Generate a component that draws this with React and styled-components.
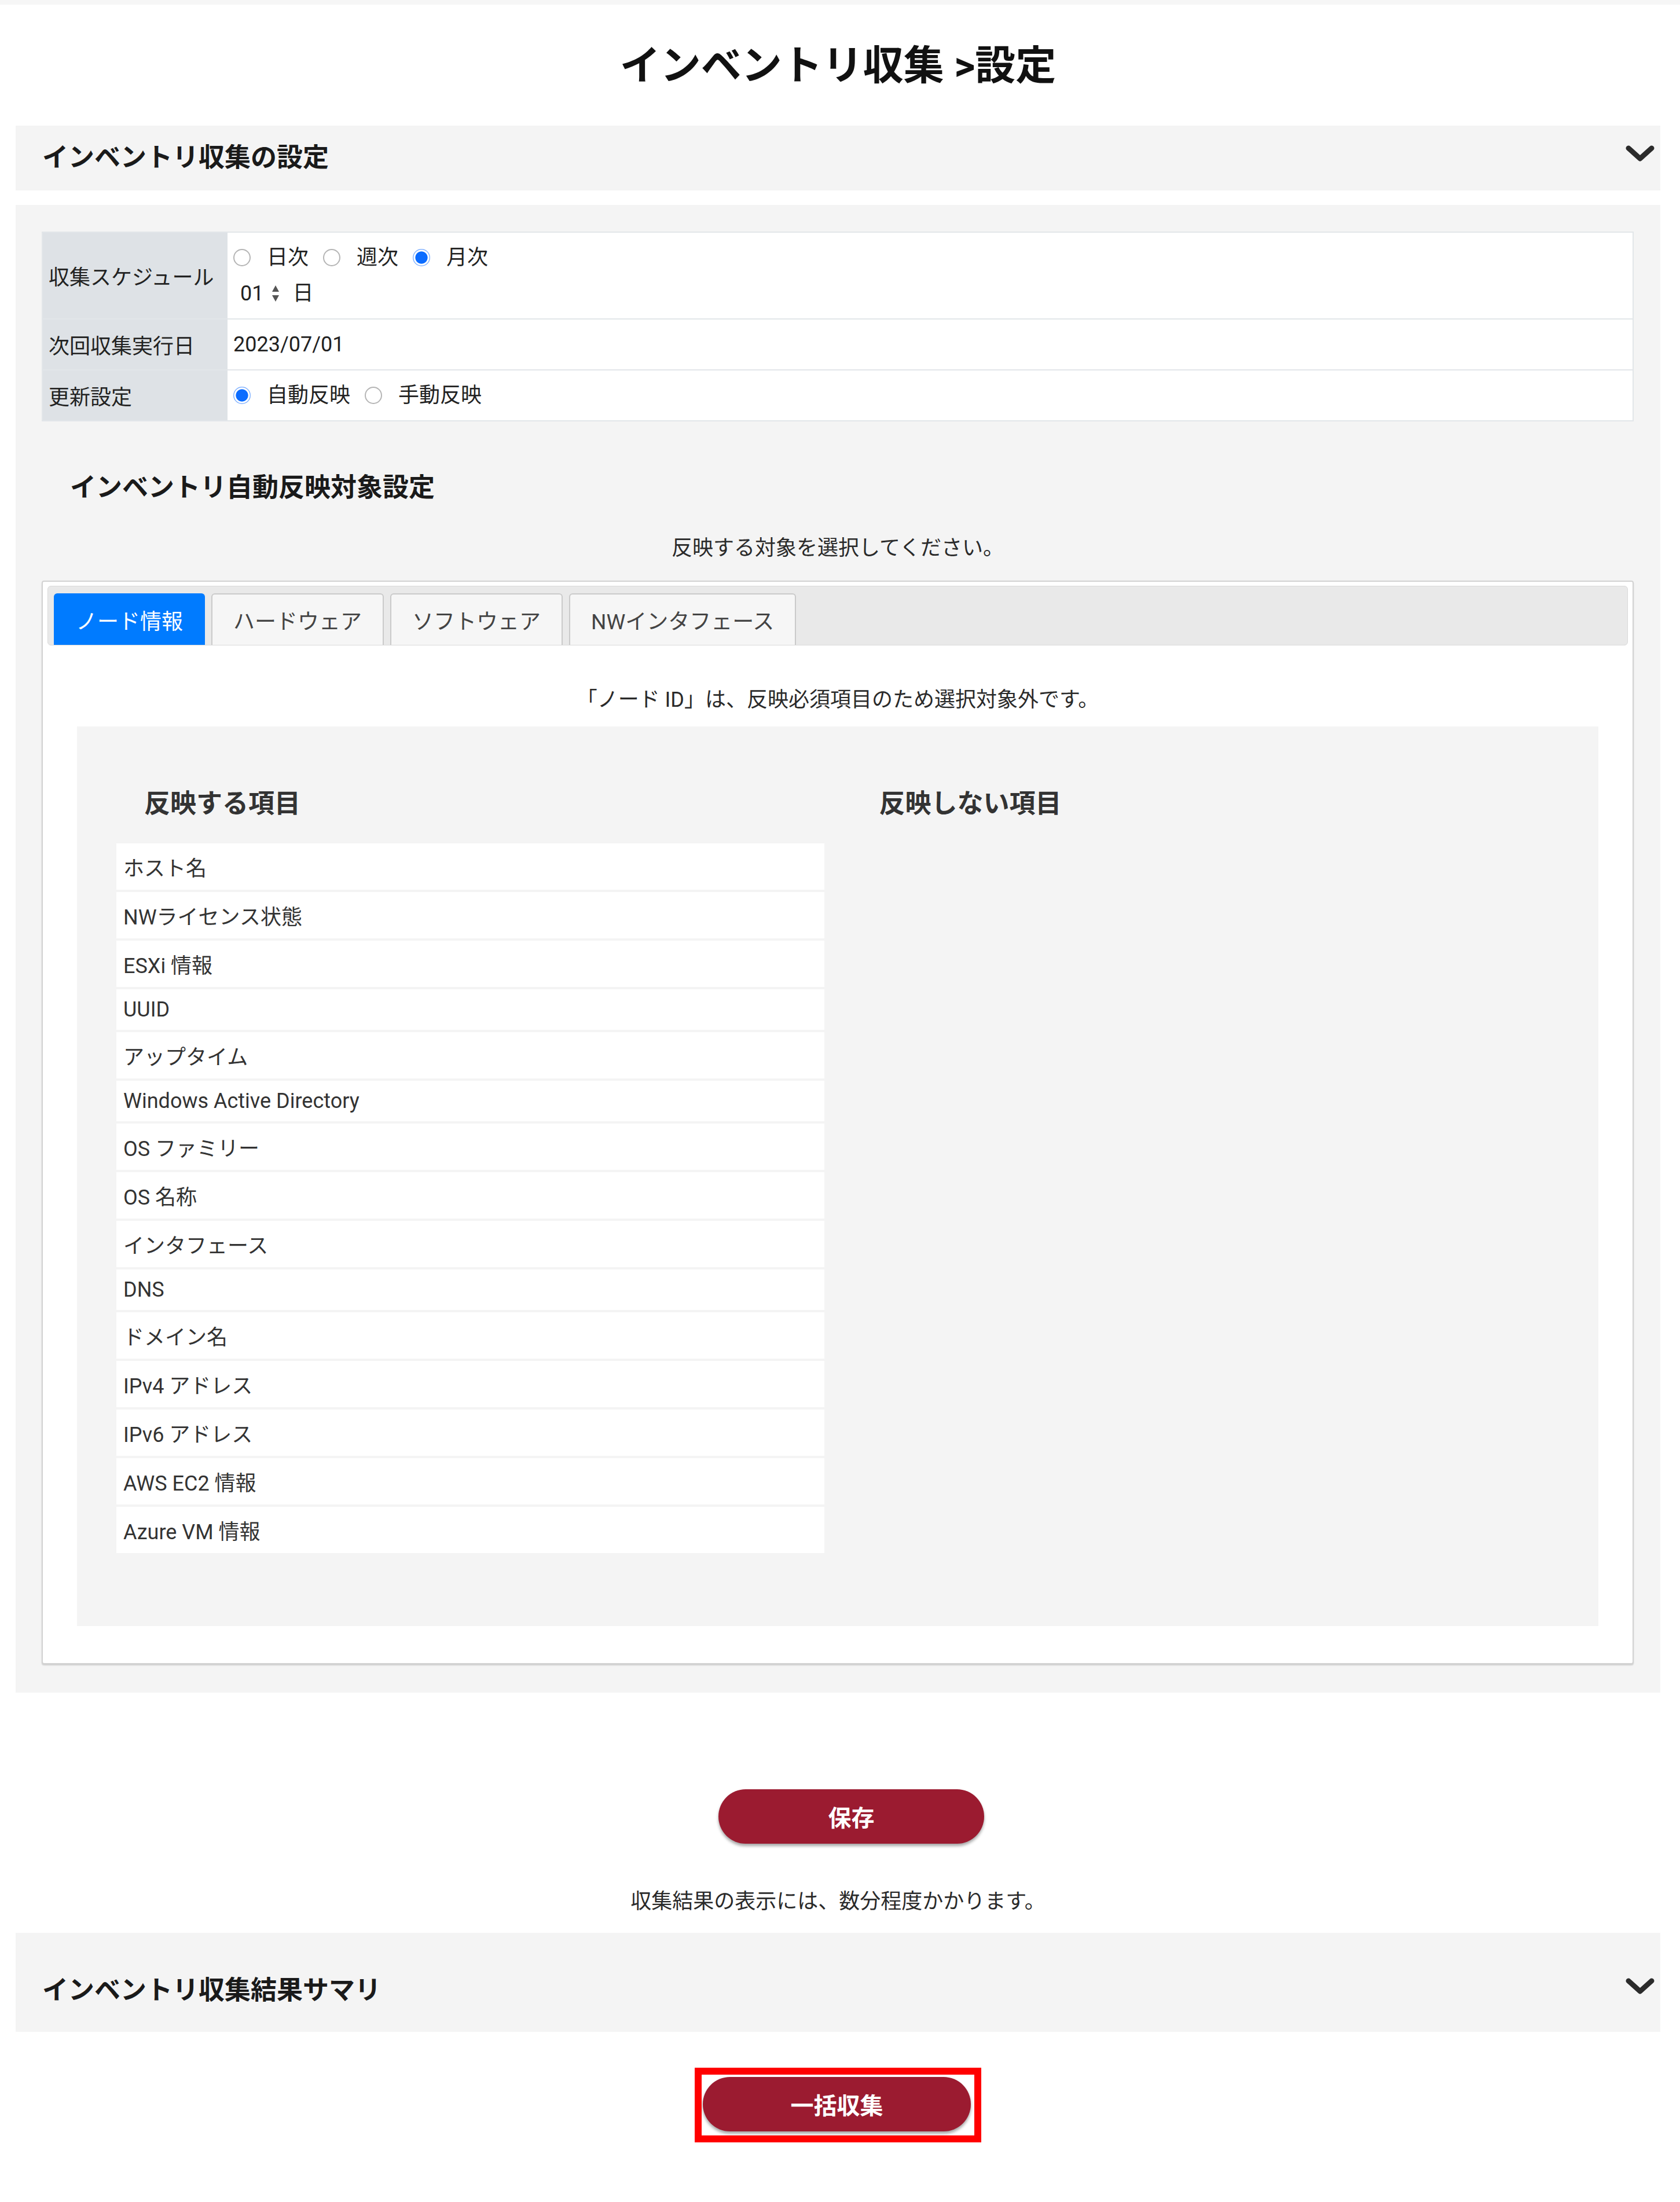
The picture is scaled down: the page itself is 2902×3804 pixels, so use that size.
import styled, { createGlobalStyle } from "styled-components";

const GlobalStyle = createGlobalStyle`
  html, body {
    margin: 0;
    padding: 0;
    background: #fff;
  }
  body {
    font-family: Roboto, "Noto Sans CJK JP", sans-serif;
    color: #222;
  }
  * {
    box-sizing: border-box;
  }
`;

const Page = styled.div`
    width: 2902px;
    padding: 0 34px 105px 27px;
  `,
  TopStrip = styled.div`
    height: 8px;
    margin: 0 -34px 0 -27px;
    background: #f6f6f6;
  `,
  Title = styled.h1`
    margin: 62px 0 59px;
    font-size: 70px;
    line-height: 88px;
    font-weight: 700;
    text-align: center;
    color: #111;
  `,
  SectionHeader = styled.div`
    display: flex;
    align-items: center;
    justify-content: space-between;
    height: ${(props) => props.$height}px;
    padding: ${(props) => props.$padTop || 0}px 10px 0 46px;
    margin-top: ${(props) => props.$gap || 0}px;
    background: #f4f4f4;
  `,
  HeaderTitle = styled.h2`
    margin: 0;
    font-size: 45px;
    line-height: 60px;
    font-weight: 700;
    color: #1a1a1a;
  `,
  ChevronIcon = styled.svg`
    width: 50px;
    height: 30px;
    margin-bottom: 16px;
  `,
  Panel = styled.div`
    margin-top: 25px;
    padding: 46px 46px 49px 45px;
    background: #f4f4f4;
  `,
  SettingsTable = styled.table`
    width: 100%;
    border-collapse: collapse;
    background: #fff;
    border: 2px solid #e2e6e9;
  `,
  Row = styled.tr`
    border-bottom: 2px solid #e2e6e9;
  `,
  LabelCell = styled.th`
    width: 320px;
    padding: 0 10px;
    background: #dee2e6;
    font-size: 36px;
    font-weight: 400;
    text-align: left;
    vertical-align: middle;
    color: #222;
  `,
  ValueCell = styled.td`
    padding: 12px 10px;
    font-size: 36px;
    line-height: 62px;
    color: #222;
  `,
  Line = styled.div`
    display: flex;
    align-items: center;
    height: 62px;
  `,
  Radio = styled.span`
    width: 30px;
    height: 30px;
    border-radius: 50%;
    flex-shrink: 0;
    margin-right: 28px;
    background: ${(props) =>
      props.$checked
        ? "radial-gradient(circle, #0b6cff 0 48%, #ffffff 52% 62%, #7fb0ff 66%)"
        : "#fff"};
    border: ${(props) => (props.$checked ? "none" : "2px solid #b5b5b5")};
  `,
  RadioText = styled.span`
    margin-right: 25px;
  `,
  DaySelect = styled.span`
    display: inline-flex;
    align-items: center;
    padding-left: 12px;
  `,
  Spinner = styled.svg`
    width: 14px;
    height: 34px;
    margin: 0 22px 0 14px;
  `,
  SubHeading = styled.h3`
    margin: 85px 0 0 49px;
    font-size: 45px;
    line-height: 60px;
    font-weight: 700;
    color: #1a1a1a;
  `,
  CenterNote = styled.p`
    margin: ${(props) => props.$gap}px 0 0;
    font-size: 36px;
    line-height: 50px;
    text-align: center;
    color: #2a2a2a;
  `,
  TabsBox = styled.div`
    margin-top: 31px;
    padding: 7px 8px 64px;
    background: #fff;
    border: 2px solid #d2d2d2;
    border-radius: 4px;
    box-shadow: 0 2px 2px rgba(0, 0, 0, 0.15);
  `,
  TabBar = styled.div`
    display: flex;
    gap: 11px;
    padding: 12px 10px 0;
    background: #e9e9e9;
    border: 1px solid #dadada;
    border-radius: 6px;
  `,
  Tab = styled.div`
    display: flex;
    align-items: center;
    height: 89px;
    padding: 0 36px;
    font-size: 37px;
    border: 2px solid ${(props) => (props.$active ? "#007bff" : "#cacaca")};
    border-bottom: none;
    border-radius: 6px 6px 0 0;
    background: ${(props) => (props.$active ? "#007bff" : "#f6f6f6")};
    color: ${(props) => (props.$active ? "#fff" : "#444")};
  `,
  TabContent = styled.div`
    padding: 0 51px;
  `,
  ItemsBox = styled.div`
    display: grid;
    grid-template-columns: 1fr 1fr;
    column-gap: 47px;
    margin-top: 21px;
    padding: 104px 68px 126px;
    background: #f4f4f4;
  `,
  ColumnTitle = styled.h4`
    margin: 0;
    padding-left: 48px;
    font-size: 45px;
    line-height: 60px;
    font-weight: 700;
    color: #333;
  `,
  ItemList = styled.div`
    display: flex;
    flex-direction: column;
    gap: 4px;
    margin-top: 38px;
  `,
  ItemRow = styled.div`
    padding: 14px 12px;
    background: #fff;
    font-size: 36px;
    line-height: normal;
    color: #333;
  `,
  ButtonRow = styled.div`
    display: flex;
    justify-content: center;
    margin-top: ${(props) => props.$gap}px;
    padding-left: ${(props) => props.$shift || 0}px;
  `,
  PillButton = styled.button`
    width: ${(props) => props.$width}px;
    height: 94px;
    border: none;
    border-radius: 47px;
    background: #9b1b30;
    color: #fff;
    font-family: Roboto, "Noto Sans CJK JP", sans-serif;
    font-size: 40px;
    font-weight: 700;
    box-shadow: 0 4px 5px rgba(0, 0, 0, 0.35);
    cursor: pointer;
  `,
  Highlight = styled.div`
    padding: 4px 6px 7px 2px;
    border: 12px solid #ff0000;
  `;

const items = [
  "ホスト名",
  "NWライセンス状態",
  "ESXi 情報",
  "UUID",
  "アップタイム",
  "Windows Active Directory",
  "OS ファミリー",
  "OS 名称",
  "インタフェース",
  "DNS",
  "ドメイン名",
  "IPv4 アドレス",
  "IPv6 アドレス",
  "AWS EC2 情報",
  "Azure VM 情報",
];

const tabs = ["ノード情報", "ハードウェア", "ソフトウェア", "NWインタフェース"];

function Chevron() {
  return (
    <ChevronIcon viewBox="0 0 50 30">
      <polyline
        points="5,6 25,24 45,6"
        fill="none"
        stroke="#2b2b2b"
        strokeWidth="9"
        strokeLinecap="round"
        strokeLinejoin="round"
      />
    </ChevronIcon>
  );
}

function RadioOption({ checked, label }) {
  return (
    <>
      <Radio $checked={checked} />
      <RadioText>{label}</RadioText>
    </>
  );
}

function App() {
  return (
    <>
      <GlobalStyle />
      <Page>
        <TopStrip />
        <Title>インベントリ収集 &gt;設定</Title>

        <SectionHeader $height={112}>
          <HeaderTitle>インベントリ収集の設定</HeaderTitle>
          <Chevron />
        </SectionHeader>

        <Panel>
          <SettingsTable>
            <tbody>
              <Row>
                <LabelCell>収集スケジュール</LabelCell>
                <ValueCell>
                  <Line>
                    <RadioOption label="日次" />
                    <RadioOption label="週次" />
                    <RadioOption checked label="月次" />
                  </Line>
                  <Line>
                    <DaySelect>
                      01
                      <Spinner viewBox="0 0 14 34">
                        <polygon points="7,3 13,14 1,14" fill="#555" />
                        <polygon points="1,20 13,20 7,31" fill="#555" />
                      </Spinner>
                      日
                    </DaySelect>
                  </Line>
                </ValueCell>
              </Row>
              <Row>
                <LabelCell>次回収集実行日</LabelCell>
                <ValueCell>2023/07/01</ValueCell>
              </Row>
              <Row>
                <LabelCell>更新設定</LabelCell>
                <ValueCell>
                  <Line>
                    <RadioOption checked label="自動反映" />
                    <RadioOption label="手動反映" />
                  </Line>
                </ValueCell>
              </Row>
            </tbody>
          </SettingsTable>

          <SubHeading>インベントリ自動反映対象設定</SubHeading>
          <CenterNote $gap={49}>反映する対象を選択してください。</CenterNote>

          <TabsBox>
            <TabBar>
              {tabs.map((t, i) => (
                <Tab key={t} $active={i === 0}>
                  {t}
                </Tab>
              ))}
            </TabBar>
            <TabContent>
              <CenterNote $gap={69}>
                「ノード ID」は、反映必須項目のため選択対象外です。
              </CenterNote>
              <ItemsBox>
                <div>
                  <ColumnTitle>反映する項目</ColumnTitle>
                  <ItemList>
                    {items.map((item) => (
                      <ItemRow key={item}>{item}</ItemRow>
                    ))}
                  </ItemList>
                </div>
                <div>
                  <ColumnTitle>反映しない項目</ColumnTitle>
                  <ItemList />
                </div>
              </ItemsBox>
            </TabContent>
          </TabsBox>
        </Panel>

        <ButtonRow $gap={167} $shift={46}>
          <PillButton $width={459}>保存</PillButton>
        </ButtonRow>
        <CenterNote $gap={75}>収集結果の表示には、数分程度かかります。</CenterNote>

        <SectionHeader $height={171} $padTop={29} $gap={29}>
          <HeaderTitle>インベントリ収集結果サマリ</HeaderTitle>
          <Chevron />
        </SectionHeader>

        <ButtonRow $gap={62}>
          <Highlight>
            <PillButton $width={463}>一括収集</PillButton>
          </Highlight>
        </ButtonRow>
      </Page>
    </>
  );
}

export default App;
